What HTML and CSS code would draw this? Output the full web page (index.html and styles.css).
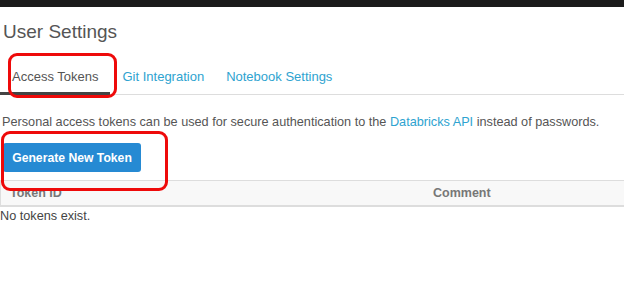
FILE: index.html
```html
<!DOCTYPE html>
<html lang="en">
<head>
    <meta charset="UTF-8">
    <title>User Settings</title>
    <link rel="stylesheet" href="styles.css">
</head>
<body>
    <div class="topbar"></div>

    <div class="page">
        <h1 class="title">User Settings</h1>

        <!-- tabs -->
        <div class="tabs">
            <a class="tab active">Access Tokens</a>
            <a class="tab">Git Integration</a>
            <a class="tab">Notebook Settings</a>
        </div>

        <p class="intro">
            Personal access tokens can be used for secure authentication to the
            <a class="link">Databricks API</a> instead of passwords.
        </p>

        <button class="generate">Generate New Token</button>

        <div class="token-table">
            <div class="table-head">
                <div class="col-id">Token ID</div>
                <div class="col-comment">Comment</div>
            </div>
            <div class="empty">No tokens exist.</div>
        </div>
    </div>

    <!-- annotation boxes -->
    <div class="mark mark-tab"></div>
    <div class="mark mark-button"></div>
</body>
</html>
```

FILE: styles.css
```css
body {
    margin: 0;
    padding: 0;
    font-family: "Liberation Sans", Arial, sans-serif;
    background-color: #fff;
    color: #555;
    position: relative;
    overflow: hidden;
}

.topbar {
    height: 7px;
    background-color: #1b1b1b;
}

.page {
    display: flex;
    flex-direction: column;
}

.title {
    margin: 14px 0 0 3px;
    font-size: 19px;
    font-weight: normal;
    line-height: 22px;
    color: #555;
}

.tabs {
    display: flex;
    margin-top: 21px;
    border-bottom: 1px solid #ddd;
}

.tab {
    font-size: 13px;
    line-height: 16px;
    padding: 5px 12px 7px 12px;
    color: #2ea3d0;
    border-bottom: 3px solid transparent;
    margin-bottom: -1px;
}

.tab.active {
    color: #555;
    border-bottom-color: #444;
}

.tab + .tab {
    padding-left: 0;
    margin-left: 12px;
}

.tab:nth-child(2) {
    padding-right: 10px;
}

.intro {
    margin: 20px 0 0 2px;
    font-size: 12.7px;
    line-height: 15px;
    color: #555;
}

.link {
    color: #2ea3d0;
}

.generate {
    align-self: flex-start;
    margin: 13px 0 0 3px;
    width: 138px;
    height: 29px;
    border: none;
    border-radius: 3px;
    background-color: #268ad3;
    color: #fff;
    font-family: "Liberation Sans", Arial, sans-serif;
    font-size: 12.2px;
    font-weight: bold;
}

.token-table {
    margin-top: 8px;
}

.table-head {
    display: flex;
    height: 24px;
    align-items: center;
    background-color: #f8f8f8;
    border-top: 1px solid #ddd;
    border-bottom: 2px solid #ddd;
    border-left: 1px solid #ddd;
    font-size: 12.5px;
    font-weight: bold;
    color: #777;
}

.col-id {
    width: 423px;
    padding-left: 9px;
}

.col-comment {
    flex: 1;
}

.empty {
    margin-top: 2px;
    font-size: 12.7px;
    line-height: 15px;
    color: #444;
}

/* red annotation outlines drawn over the page */
.mark {
    position: absolute;
    border: 3px solid #ee0a0a;
    border-radius: 9px;
}

.mark-tab {
    left: 8px;
    top: 53px;
    width: 103px;
    height: 39px;
}

.mark-button {
    left: 1px;
    top: 131px;
    width: 161px;
    height: 54px;
}
```
